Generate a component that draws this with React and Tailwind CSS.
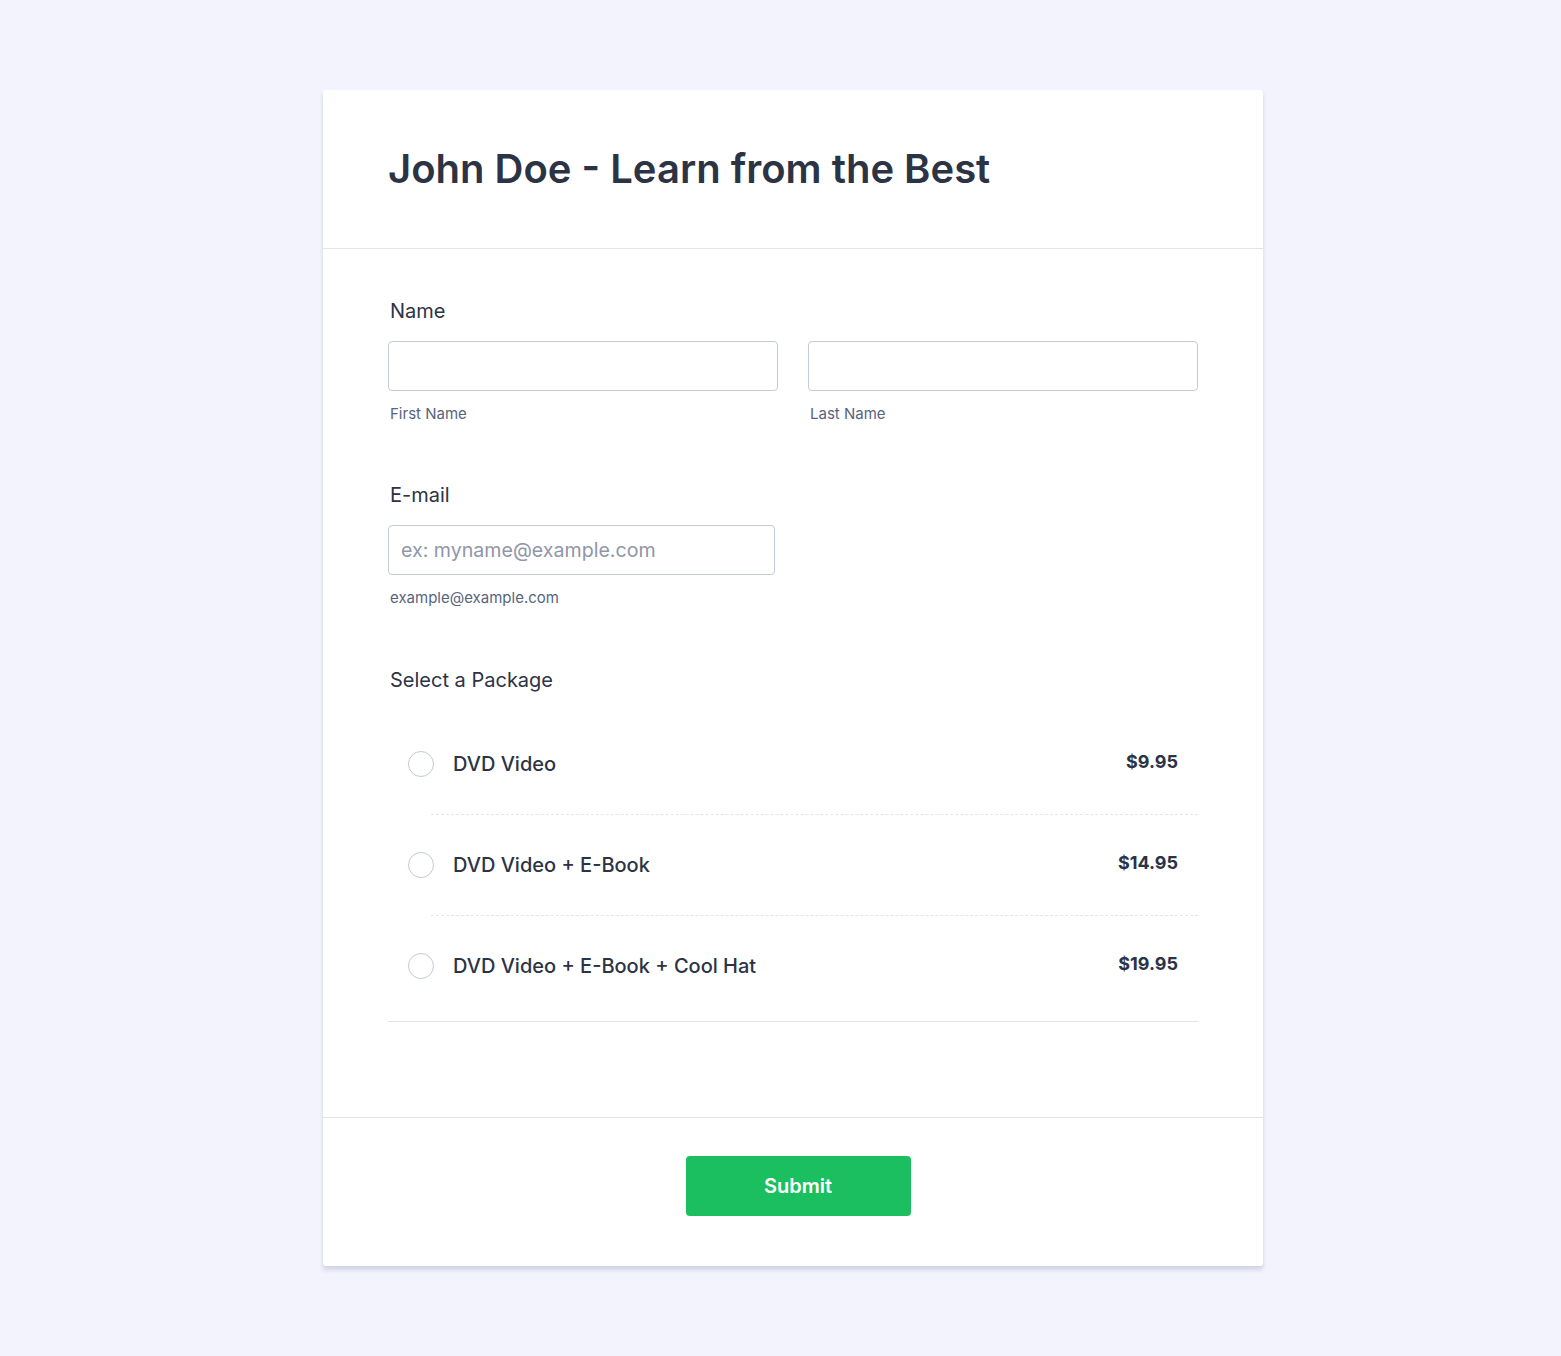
import React, { useState } from "react";

const packages = [
  { id: "p1", label: "DVD Video", price: "$9.95" },
  { id: "p2", label: "DVD Video + E-Book", price: "$14.95" },
  { id: "p3", label: "DVD Video + E-Book + Cool Hat", price: "$19.95" },
];

const App = () => {
  const [selected, setSelected] = useState(null);

  return (
    <div
      className="min-h-[1356px] w-full bg-[#f3f3fe] pt-[90px] pb-[90px]"
      style={{ fontFamily: "Inter, 'Noto Sans', sans-serif" }}
    >
      <div className="ml-[323px] w-[940px] rounded-[3px] bg-white shadow-[0_4px_4px_rgba(87,100,126,0.21)]">
        {/* Header */}
        <div className="border-b border-[#e3e3e9] px-[65px] pt-[55px] pb-[55px]">
          <h1 className="text-[40px] leading-[48px] font-semibold text-[#2c3345]">
            John Doe - Learn from the Best
          </h1>
        </div>

        {/* Form body */}
        <div className="px-[65px] pt-[47px] pb-[95px]">
          <div>
            <label className="block px-[2px] text-[20px] leading-[30px] text-[#2c3345]">
              Name
            </label>
            <div className="mt-[15px] flex gap-[30px]">
              <div className="flex-1">
                <input
                  type="text"
                  className="h-[50px] w-full rounded-[4px] border border-[#c3cad8] px-3 text-[20px] outline-none"
                />
                <div className="mt-[12px] px-[2px] text-[15px] leading-[22px] text-[#57647e]">
                  First Name
                </div>
              </div>
              <div className="flex-1">
                <input
                  type="text"
                  className="h-[50px] w-full rounded-[4px] border border-[#c3cad8] px-3 text-[20px] outline-none"
                />
                <div className="mt-[12px] px-[2px] text-[15px] leading-[22px] text-[#57647e]">
                  Last Name
                </div>
              </div>
            </div>
          </div>

          <div className="mt-[55px]">
            <label className="block px-[2px] text-[20px] leading-[30px] text-[#2c3345]">
              E-mail
            </label>
            <input
              type="email"
              placeholder="ex: myname@example.com"
              className="mt-[15px] h-[50px] w-[387px] rounded-[4px] border border-[#c3cad8] px-3 text-[19.6px] text-[#2c3345] outline-none placeholder:text-[#8f96a8]"
            />
            <div className="mt-[12px] px-[2px] text-[15px] leading-[22px] text-[#57647e]">
              example@example.com
            </div>
          </div>

          <div className="mt-[56px]">
            <label className="block px-[2px] text-[20px] leading-[30px] text-[#2c3345]">
              Select a Package
            </label>
            <div className="mt-[19px] border-b border-[#e3e3e9] pb-[5px]">
              {packages.map((p, i) => (
                <div key={p.id}>
                  <div
                    onClick={() => setSelected(p.id)}
                    className="flex h-[100px] cursor-pointer items-center px-5"
                  >
                    <span
                      className={`flex h-[26px] w-[26px] shrink-0 items-center justify-center rounded-full border ${
                        selected === p.id ? "border-[#1bbf5f]" : "border-[#c3cad8]"
                      }`}
                    >
                      {selected === p.id && (
                        <span className="h-[14px] w-[14px] rounded-full bg-[#1bbf5f]" />
                      )}
                    </span>
                    <span className="ml-[19px] flex-1 text-[20px] leading-[28px] font-medium text-[#2c3345]">
                      {p.label}
                    </span>
                    <span className="-mt-[4px] text-[18px] leading-[26px] font-bold text-[#2c3345]">
                      {p.price}
                    </span>
                  </div>
                  {i < packages.length - 1 && (
                    <div className="ml-[43px] border-t border-dashed border-[#e3e5ee]" />
                  )}
                </div>
              ))}
            </div>
          </div>
        </div>

        {/* Footer */}
        <div className="flex justify-center border-t border-[#e3e3e9] pt-[38px] pb-[50px]">
          <button
            type="button"
            className="ml-[10px] h-[60px] w-[225px] rounded-[4px] bg-[#1bbf5f] text-[20px] font-semibold text-white"
          >
            Submit
          </button>
        </div>
      </div>
    </div>
  );
};

export default App;
